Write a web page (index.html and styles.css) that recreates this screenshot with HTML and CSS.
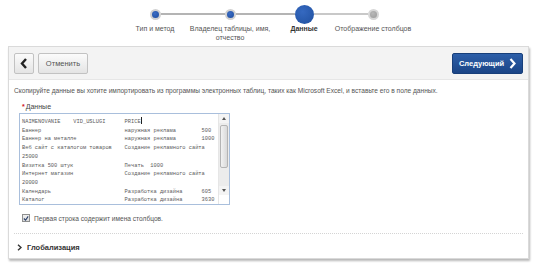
FILE: index.html
```html
<!DOCTYPE html>
<html lang="ru">
<head>
<meta charset="utf-8">
<link rel="stylesheet" href="styles.css">
</head>
<body>
<div class="stepper">
  <div class="step step-done step-first">
    <div class="dot-row"><span class="dot"></span></div>
    <div class="step-label">Тип и метод</div>
  </div>
  <div class="step step-done">
    <div class="dot-row"><span class="dot"></span></div>
    <div class="step-label">Владелец таблицы, имя,<br>отчество</div>
  </div>
  <div class="step step-current">
    <div class="dot-row"><span class="dot"></span></div>
    <div class="step-label">Данные</div>
  </div>
  <div class="step step-next step-last">
    <div class="dot-row"><span class="dot"></span></div>
    <div class="step-label">Отображение столбцов</div>
  </div>
</div>

<div class="panel">
  <div class="toolbar">
    <div class="toolbar-left">
      <button class="btn btn-back" aria-label="Назад">
        <svg width="8" height="11" viewBox="0 0 8 11"><polyline points="6,1 2,5.5 6,10" fill="none" stroke="#222" stroke-width="2.4"/></svg>
      </button>
      <button class="btn btn-cancel">Отменить</button>
    </div>
    <button class="btn btn-next">Следующий
      <svg width="7" height="11" viewBox="0 0 7 11"><polyline points="1.5,1 5.5,5.5 1.5,10" fill="none" stroke="#fff" stroke-width="2.2"/></svg>
    </button>
  </div>
  <div class="content">
    <p class="desc">Скопируйте данные вы хотите импортировать из программы электронных таблиц, таких как Microsoft Excel, и вставьте его в поле данных.</p>
    <div class="field">
      <div class="field-label"><span class="req">*</span>Данные</div>
      <div class="textarea">
<pre class="ta-text">NAIMENOVANIE    VID_USLUGI      PRICE<span class="caret"></span>
Баннер                          наружная реклама        500
Баннер на металле               наружная реклама        1000
Веб сайт с каталогом товаров    Создание рекламного сайта
25000
Визитка 500 штук                Печать  1000
Интернет магазин                Создание рекламного сайта
20000
Календарь                       Разработка дизайна      605
Каталог                         Разработка дизайна      3630</pre>
        <div class="scrollbar">
          <div class="sb-btn sb-up"></div>
          <div class="sb-track"><div class="sb-thumb"></div></div>
          <div class="sb-btn sb-down"></div>
          <div class="sb-corner"></div>
        </div>
      </div>
      <label class="check-row"><span class="checkbox"><svg width="7" height="7" viewBox="0 0 7 7"><polyline points="1,3.5 3,5.5 6,1" fill="none" stroke="#2a3f6a" stroke-width="1.3"/></svg></span>Первая строка содержит имена столбцов.</label>
    </div>
    <div class="section">
      <svg width="5" height="7" viewBox="0 0 5 7"><polyline points="1,0.8 4,3.5 1,6.2" fill="none" stroke="#333" stroke-width="1.4"/></svg>
      <span>Глобализация</span>
    </div>
  </div>
</div>
</body>
</html>
```
FILE: styles.css
```css
* { box-sizing: border-box; }
html, body { margin: 0; padding: 0; background: #fff; }
body {
  font-family: "Liberation Sans", Arial, sans-serif;
  font-size: 7px;
  color: #444;
  width: 541px;
  height: 266px;
  overflow: hidden;
}

/* Stepper */
.stepper {
  display: flex;
  height: 46px;
  padding-top: 4px;
  margin-left: 117px;
}
.step { display: flex; flex-direction: column; align-items: center; }
.step:nth-child(1) { width: 76px; }
.step:nth-child(2) { width: 74px; }
.step:nth-child(3) { width: 74px; }
.step:nth-child(4) { width: 64px; }
.dot-row {
  display: flex;
  align-items: center;
  width: 100%;
  height: 20px;
}
.dot-row::before, .dot-row::after {
  content: "";
  flex: 1;
  height: 2px;
  background: #b4b4b4;
}
.step-first .dot-row::before { background: transparent; }
.step-last .dot-row::after { background: transparent; }
.step-current .dot-row::after,
.step-next .dot-row::before { background: #c8c8c8; }
.dot {
  width: 11px;
  height: 11px;
  border-radius: 50%;
  border: 2px solid #d0d0d0;
  background: radial-gradient(circle at 40% 35%, #3a6cc4, #1d4c9e);
  flex: none;
}
.step-current .dot {
  width: 19px;
  height: 19px;
  border: none;
  background: radial-gradient(circle at 40% 35%, #3569c0, #1f4f9f);
}
.step-next .dot {
  background: radial-gradient(circle at 40% 35%, #b8b8b8, #9a9a9a);
  border-color: #d6d6d6;
}
.step-label {
  text-align: center;
  line-height: 9.5px;
  color: #555;
  white-space: nowrap;
  margin-top: -0.5px;
}
.step-current .step-label { font-weight: bold; color: #333; }

/* Panel */
.panel {
  margin-left: 8px;
  width: 521px;
  height: 213px;
  border: 1px solid #dadada;
  box-shadow: 1px 2px 2px rgba(0,0,0,0.28);
  background: #fff;
}
.toolbar {
  display: flex;
  justify-content: space-between;
  align-items: center;
  height: 33px;
  padding: 0 5px;
  background: #f3f3f3;
  border-bottom: 1px solid #e6e6e6;
}
.toolbar-left { display: flex; gap: 4px; }
.btn {
  height: 21px;
  border-radius: 2px;
  font-family: inherit;
  font-size: 7.5px;
  padding: 0;
  display: flex;
  align-items: center;
  justify-content: center;
  cursor: pointer;
}
.btn-back, .btn-cancel {
  border: 1px solid #c2c2c2;
  background: linear-gradient(#fbfbfb, #e4e4e4);
  color: #555;
}
.btn-back { width: 20px; }
.btn-cancel { width: 50px; }
.btn-next {
  width: 71px;
  border: 1px solid #183f7a;
  background: linear-gradient(#2d5fa9, #1b4586);
  color: #fff;
  font-weight: bold;
  gap: 5px;
}

.content { padding: 6px 5px 0 5px; }
.desc {
  margin: 0;
  line-height: 10px;
  font-size: 6.6px;
  color: #555;
}
.field { padding-left: 5px; margin-top: 6px; }
.field-label {
  line-height: 10px;
  font-size: 7px;
  color: #444;
  padding-left: 3px;
}
.req { color: #d0161b; font-weight: bold; margin-right: 1px; }
.textarea {
  margin-top: 1px;
  width: 211px;
  height: 92px;
  border: 1px solid #a9bfdc;
  display: flex;
  overflow: hidden;
  background: #fff;
}
.ta-text {
  flex: 1;
  margin: 0;
  padding: 3px 0 0 2px;
  font-family: "Liberation Mono", "Courier New", monospace;
  font-size: 5.35px;
  line-height: 8.7px;
  color: #5a5a5a;
  white-space: pre;
}
.caret {
  display: inline-block;
  width: 1px;
  height: 7px;
  background: #222;
  vertical-align: -1px;
}
.scrollbar {
  width: 11px;
  flex: none;
  display: flex;
  flex-direction: column;
  background: #f0f0f0;
  border-left: 1px solid #e6e6e6;
}
.sb-btn {
  height: 9px;
  position: relative;
  background: #f4f4f4;
}
.sb-up::after, .sb-down::after {
  content: "";
  position: absolute;
  left: 3px;
  border-left: 2px solid transparent;
  border-right: 2px solid transparent;
}
.sb-up::after { top: 3px; border-bottom: 3px solid #555; }
.sb-down::after { top: 3px; border-top: 3px solid #555; }
.sb-track { height: 63px; padding-top: 2px; background: #ececec; }
.sb-thumb {
  height: 43px;
  margin: 0 1px;
  border: 1px solid #b4b4b4;
  border-radius: 2px;
  background: linear-gradient(90deg, #f2f2f2, #d9d9d9);
}
.sb-corner { flex: 1; background: #fff; }

.check-row {
  display: flex;
  align-items: center;
  gap: 4px;
  margin-top: 8px;
  padding-left: 3px;
  height: 10px;
  font-size: 6.6px;
  color: #555;
}
.checkbox {
  width: 8px;
  height: 8px;
  border: 1px solid #8e8f8f;
  background: linear-gradient(#f0f0f0, #dcdcdc);
  display: flex;
  align-items: center;
  justify-content: center;
}

.section {
  margin-top: 10px;
  border-top: 1px dotted #d4d4d4;
  padding: 9px 0 0 3px;
  display: flex;
  align-items: center;
  gap: 5px;
  font-weight: bold;
  font-size: 7.5px;
  color: #333;
}
```
